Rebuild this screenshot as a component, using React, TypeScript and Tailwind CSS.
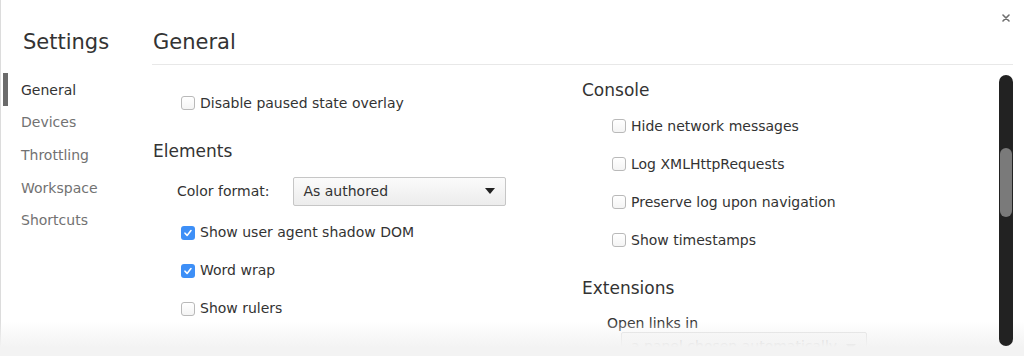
import React from "react";

const sections = ["General", "Devices", "Throttling", "Workspace", "Shortcuts"];

function Checkbox({ checked }: { checked?: boolean }) {
  if (checked) {
    return (
      <span className="flex h-[14px] w-[14px] shrink-0 items-center justify-center rounded-[3px] bg-[#3d8ff7]">
        <svg width="10" height="10" viewBox="0 0 10 10" fill="none">
          <path d="M2 5.2 4.1 7.4 8 2.6" stroke="white" strokeWidth="1.6" strokeLinecap="round" strokeLinejoin="round" />
        </svg>
      </span>
    );
  }
  return (
    <span className="h-[14px] w-[14px] shrink-0 rounded-[3px] border border-[#b9b9b9] bg-gradient-to-b from-white to-[#f4f4f4]" />
  );
}

function CheckRow({ label, checked }: { label: string; checked?: boolean }) {
  return (
    <div className="flex h-[38px] items-center gap-[5px] text-[14px] text-[#333]">
      <Checkbox checked={checked} />
      <span>{label}</span>
    </div>
  );
}

function Select({ value, disabled, className }: { value: string; disabled?: boolean; className: string }) {
  return (
    <div
      className={`flex h-[29px] items-center justify-between rounded-[2px] border pl-[9px] pr-[10px] text-[14px] ${
        disabled
          ? "border-[#dcdcdc] bg-[#fafafa] text-[#b5b5b5]"
          : "border-[#c6c6c6] bg-gradient-to-b from-[#fbfbfb] to-[#ececec] text-[#333]"
      } ${className}`}
    >
      <span className="truncate">{value}</span>
      <svg width="10" height="6" viewBox="0 0 10 6" className="shrink-0">
        <path d="M0 0h10L5 6z" fill={disabled ? "#9a9a9a" : "#222"} />
      </svg>
    </div>
  );
}

export default function App() {
  return (
    <div className="relative flex h-[356px] w-[1024px] flex-col overflow-hidden bg-white font-['DejaVu_Sans',sans-serif]">
      <div className="flex h-[347px] border-l border-[#dcdcdc]">
        {/* Sidebar */}
        <aside className="w-[151px] shrink-0">
          <h1 className="pl-[22px] pt-[30px] text-[21px] leading-[24px] text-[#333]">Settings</h1>
          <nav className="mt-[19px]">
            {sections.map((s, i) => (
              <div key={s} className="flex h-[32.67px] items-stretch">
                <span className={`ml-[2px] w-[5px] ${i === 0 ? "bg-[#6b6b6b]" : ""}`} />
                <span
                  className={`ml-[13px] mt-[2px] self-center text-[14px] ${i === 0 ? "text-[#333]" : "text-[#727272]"}`}
                >
                  {s}
                </span>
              </div>
            ))}
          </nav>
        </aside>

        {/* Main panel */}
        <main className="mr-[11px] flex min-w-0 flex-1 flex-col">
          <div className="h-[65px] shrink-0 border-b border-[#e8e8e8] pl-[1px] pt-[30px]">
            <h2 className="text-[21px] leading-[24px] text-[#333]">General</h2>
          </div>

          <div className="flex min-h-0 flex-1 overflow-hidden">
            <div className="w-[430px] shrink-0 pl-[29px] pt-[19px]">
              <CheckRow label="Disable paused state overlay" />

              <h3 className="-ml-[28px] mt-[19.4px] text-[17px] leading-[20px] text-[#333]">Elements</h3>
              <div className="-ml-[4px] mt-[15.6px] flex items-center gap-[24px] text-[14px] text-[#333]">
                <span>Color format:</span>
                <Select value="As authored" className="w-[213px]" />
              </div>
              <div className="mt-[8px]">
                <CheckRow label="Show user agent shadow DOM" checked />
                <CheckRow label="Word wrap" checked />
                <CheckRow label="Show rulers" />
              </div>
            </div>

            <div className="flex-1 pt-[15px]">
              <h3 className="text-[17px] leading-[20px] text-[#333]">Console</h3>
              <div className="ml-[30px] mt-[7px]">
                <CheckRow label="Hide network messages" />
                <CheckRow label="Log XMLHttpRequests" />
                <CheckRow label="Preserve log upon navigation" />
                <CheckRow label="Show timestamps" />
              </div>
              <h3 className="mt-[19.4px] text-[17px] leading-[20px] text-[#333]">Extensions</h3>
              <p className="ml-[25px] mt-[17px] text-[14px] leading-[17px] text-[#333]">Open links in</p>
              <Select value="a panel chosen automatically" disabled className="ml-[39px] w-[246px]" />
            </div>

            {/* Scrollbar */}
            <div className="relative z-10 mb-[1px] mt-[10px] flex w-[14px] shrink-0 flex-col rounded-full bg-[#222] px-[1px] pt-[73px]">
              <div className="h-[69px] rounded-full bg-[#7a7a7a]" />
            </div>
          </div>
        </main>
      </div>

      <div className="h-[9px] bg-[#f3f3f3]" />

      {/* bottom fade over scroll content */}
      <div className="pointer-events-none absolute bottom-[9px] left-0 h-[26px] w-full bg-gradient-to-b from-white/0 to-[#f3f3f3]" />

      <button className="absolute right-[14px] top-[14px] text-[#6e6e6e]">
        <svg width="8" height="8" viewBox="0 0 8 8">
          <path d="M1 1l6 6M7 1 1 7" stroke="currentColor" strokeWidth="1.6" strokeLinecap="round" />
        </svg>
      </button>
    </div>
  );
}
